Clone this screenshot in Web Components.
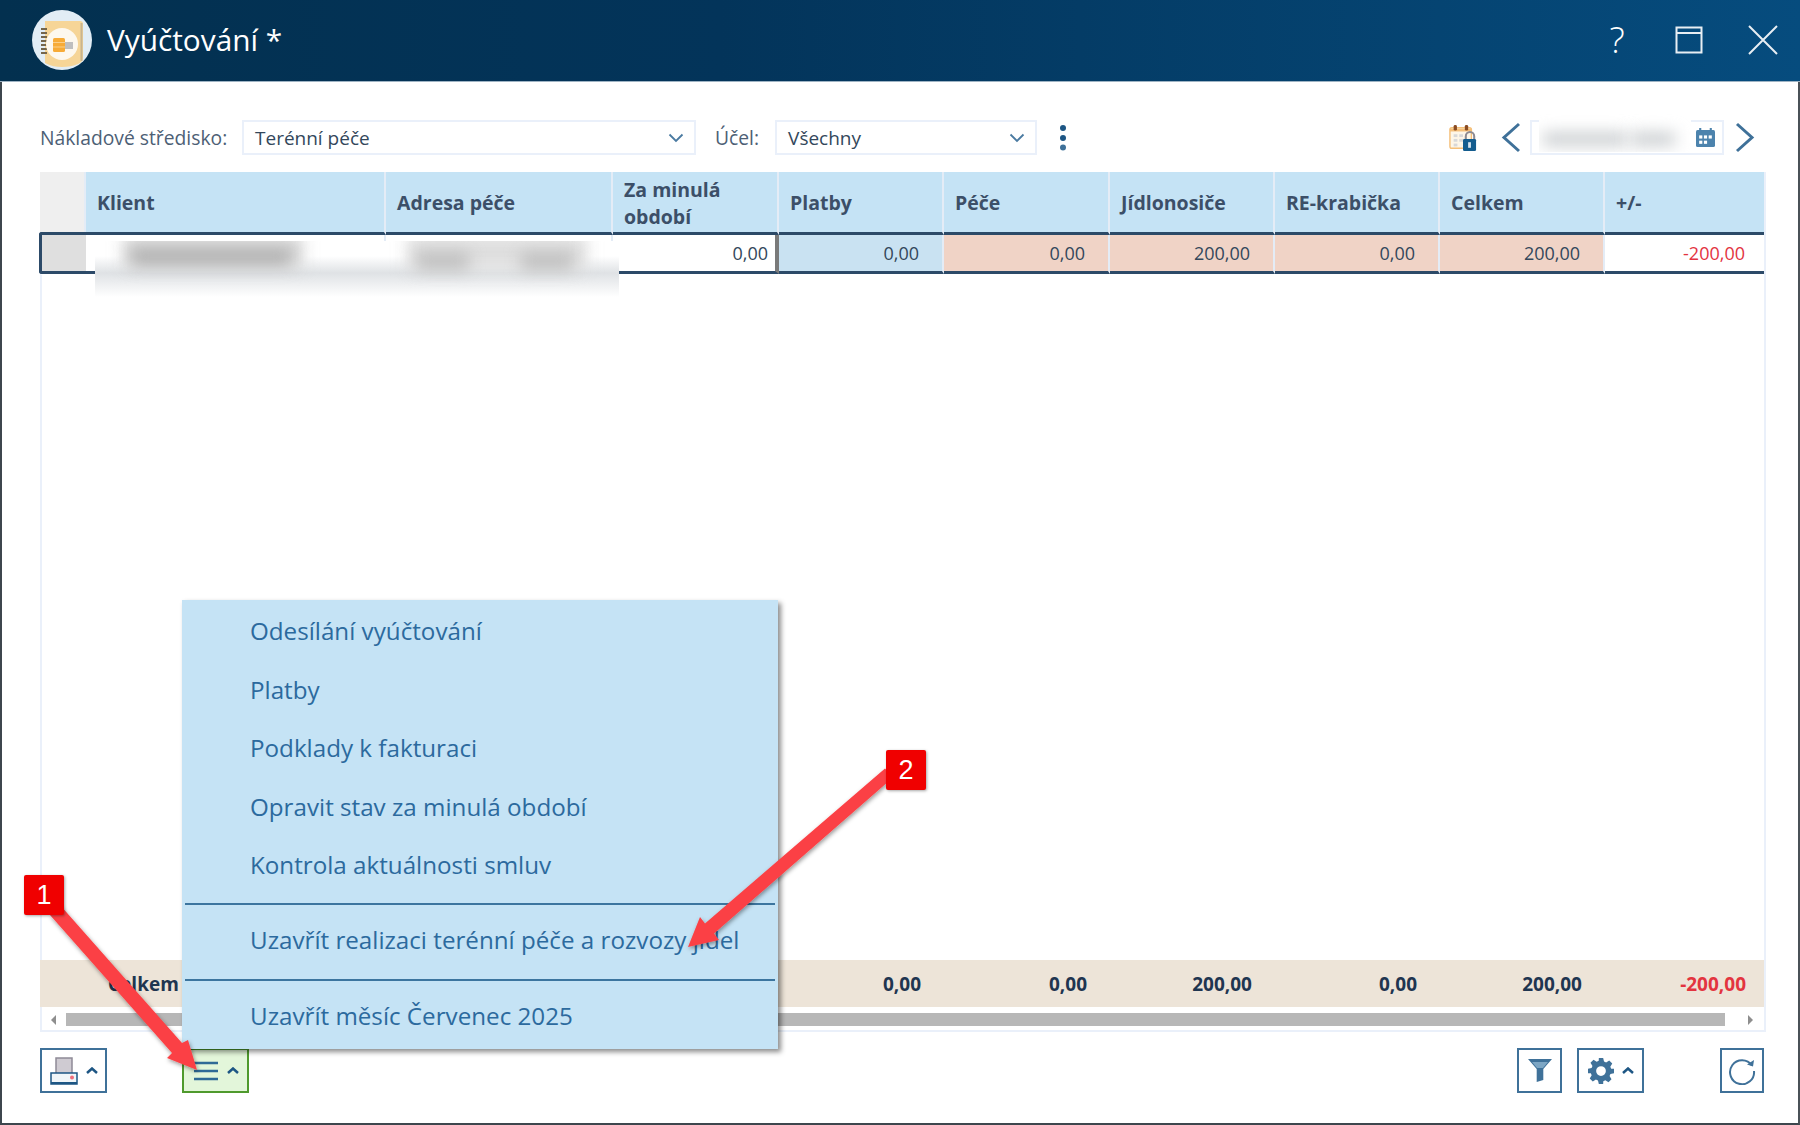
<!DOCTYPE html>
<html lang="cs">
<head>
<meta charset="utf-8">
<title>Vyúčtování</title>
<style>
html, body { margin: 0; padding: 0; background: #fff; }
body { width: 1800px; height: 1125px; overflow: hidden; font-family: "Open Sans", "Noto Sans", sans-serif; }
</style>
</head>
<body>
<app-window>
  <title-bar slot="title" caption="Vyúčtování *"></title-bar>
  <filter-bar slot="filters"></filter-bar>
  <bill-grid slot="grid"></bill-grid>
  <bottom-bar slot="actions"></bottom-bar>
  <action-menu slot="overlay"></action-menu>
  <call-outs slot="overlay"></call-outs>
</app-window>

<script>
class AppWindow extends HTMLElement {
    constructor() {
        super();
        this.attachShadow({mode: 'open'});
        this.shadowRoot.innerHTML = `
      <style>
    :host {
        display: flex;
        flex-direction: column;
        position: relative;
        width: 1800px;
        height: 1125px;
        box-sizing: border-box;
        border-left: 2px solid #3d464d;
        border-right: 2px solid #4a5157;
        border-bottom: 2px solid #3d464d;
        background: #fff;
    }
    .content {
        flex: 1;
        display: flex;
        flex-direction: column;
        min-height: 0;
        padding: 38px 32px 30px 38px;
    }
      </style>
      <slot name="title"></slot>
      <div class="content">
        <slot name="filters"></slot>
        <slot name="grid"></slot>
        <slot name="actions"></slot>
      </div>
      <slot name="overlay"></slot>
  `;
    }
}

class TitleBar extends HTMLElement {
    constructor() {
        super();
        this.attachShadow({mode: 'open'});
        this.shadowRoot.innerHTML = `
      <style>
    :host {
        display: flex;
        align-items: center;
        flex: none;
        height: 82px;
        margin-left: -2px;
        margin-right: -2px;
        padding: 0 0 2px 32px;
        box-sizing: border-box;
        background: linear-gradient(90deg, #03304f 0%, #03345a 40%, #064c7e 100%);
        border-bottom: 1px solid #9fb4c4;
        color: #fff;
    }
    .logo { width: 60px; height: 60px; flex: none; }
    h1 {
        margin: 0 0 0 15px;
        font: 400 29.8px "Open Sans", sans-serif;
        flex: 1;
    }
    .help {
        font: 300 36px "Open Sans", sans-serif;
        width: 40px;
        text-align: center;
        margin-right: 38px;
    }
    svg.btn { flex: none; }
      </style>
      <svg class="logo" viewBox="0 0 60 60">
        <circle cx="30" cy="30" r="30" fill="#e2edf5"/>
        <path d="M13 11h35a3 3 0 0 1 3 3v33c0 3-1 5-5 7-4 2-10 3-16 3-6 0-11-1-17-4z" fill="#f6d597"/>
        <path d="M49.500 13v38" stroke="#c9b48f" stroke-width="2"/>
        <g fill="#75664b"><rect x="9" y="18" width="6" height="2"/><rect x="9" y="22" width="6" height="2"/><rect x="9" y="26" width="6" height="2"/><rect x="9" y="30" width="6" height="2"/><rect x="9" y="34" width="6" height="2"/><rect x="9" y="38" width="6" height="2"/><rect x="9" y="42" width="6" height="2"/></g>
        <circle cx="30" cy="34" r="16" fill="#fdf8ee"/>
        <rect x="21" y="28" width="12" height="14" rx="1.500" fill="#f7ab37"/>
        <path d="M21 32.500h12M21 37h12" stroke="#fbd08a" stroke-width="1"/>
        <rect x="33" y="32" width="8" height="7" fill="#bfbfbf"/>
      </svg>
      <h1>${this.getAttribute('caption')}</h1>
      <span class="help">?</span>
      <svg class="btn" width="28" height="28" viewBox="0 0 28 28" style="margin-right:45px" fill="none" stroke="#e8eef3">
        <rect x="1.500" y="1.500" width="25" height="25" stroke-width="2"/>
        <path d="M1.500 7h25" stroke-width="2"/>
      </svg>
      <svg class="btn" width="30" height="30" viewBox="0 0 30 30" style="margin-right:22px" fill="none" stroke="#e8eef3" stroke-width="2">
        <path d="M1 1l28 28M29 1L1 29"/>
      </svg>
  `;
    }
}

class ComboBox extends HTMLElement {
    constructor() {
        super();
        this.attachShadow({mode: 'open'});
        this.shadowRoot.innerHTML = `
      <style>
    :host {
        display: flex;
        align-items: center;
        justify-content: space-between;
        box-sizing: border-box;
        height: 35px;
        padding: 0 10px 0 11px;
        border: 2px solid #eaf0fa;
        background: #fff;
        font: 19px "Open Sans", sans-serif;
        color: #33475b;
    }
    svg { display: block; }
      </style>
      <slot></slot>
      <svg width="16" height="10" viewBox="0 0 16 10" fill="none" stroke="#4a7aa1" stroke-width="1.800"><path d="M1.500 1.500L8 8l6.500-6.500"/></svg>
  `;
    }
}

class FilterBar extends HTMLElement {
    constructor() {
        super();
        this.attachShadow({mode: 'open'});
        this.shadowRoot.innerHTML = `
      <style>
    :host {
        display: flex;
        align-items: center;
        flex: none;
        height: 35px;
        margin: 0 2px 17px 0;
        font: 19.300px "Open Sans", sans-serif;
        color: #4d6075;
    }
    .lbl { white-space: nowrap; flex: none; }
    .cost-lbl { width: 202px; }
    combo-box.cost { width: 454px; flex: none; }
    combo-box.goal { width: 262px; flex: none; margin-left: 16px; }
    .goal-lbl { margin-left: 19px; }
    .dots { margin-left: 22px; }
    .spacer { flex: 1; }
    .date {
        position: relative;
        box-sizing: border-box;
        width: 194px;
        height: 35px;
        margin: 0 11px 0 9px;
        border: 2px solid #eaf0fa;
    }
    .date svg { position: absolute; right: 7px; top: 6px; }
    .veil {
        position: absolute;
        left: 7px;
        top: -8px;
        width: 152px;
        height: 38px;
        overflow: hidden;
        background: #fff;
    }
    .veil i {
        position: absolute;
        top: 19px;
        height: 12px;
        background: #c3c7ca;
        filter: blur(8px);
    }
    svg { display: block; flex: none; }
      </style>
      <span class="lbl cost-lbl">Nákladové středisko:</span>
      <combo-box class="cost">Terénní péče</combo-box>
      <span class="lbl goal-lbl">Účel:</span>
      <combo-box class="goal">Všechny</combo-box>
      <svg class="dots" width="8" height="28" viewBox="0 0 8 28" fill="#3f7199">
        <circle cx="4" cy="4" r="3" fill="#1d5684"/><circle cx="4" cy="14" r="3" fill="#1d5684"/><circle cx="4" cy="23.500" r="3"/>
      </svg>
      <div class="spacer"></div>
      <svg width="28" height="28" viewBox="0 0 30 30">
        <rect x="1" y="4" width="23" height="22" rx="2" fill="#fdf6e8" stroke="#f5bf78" stroke-width="1.500"/>
        <path d="M1 5h23v3H1z" fill="#f5bf78"/>
        <rect x="5" y="1" width="3.500" height="6" rx="1.500" fill="#8a4b22"/>
        <rect x="17" y="1" width="3.500" height="6" rx="1.500" fill="#8a4b22"/>
        <g fill="#d8d8d8"><rect x="5" y="11" width="4" height="3"/><rect x="11" y="11" width="4" height="3"/><rect x="5" y="16" width="4" height="3"/><rect x="11" y="16" width="4" height="3"/><rect x="5" y="21" width="4" height="3"/></g>
        <path d="M18 17v-4a4.500 4.500 0 0 1 9 0v4" fill="none" stroke="#8d8a92" stroke-width="2.200"/>
        <rect x="15" y="16" width="14" height="13" rx="1.500" fill="#135c8e"/>
        <rect x="20.500" y="19.500" width="3" height="6" fill="#d5e3ee"/>
      </svg>
      <svg style="margin-left:24px" width="20" height="31" viewBox="0 0 20 31" fill="none" stroke="#3f7199" stroke-width="3"><path d="M18 2L3 15.500 18 29"/></svg>
      <div class="date">
        <div class="veil"><i style="left:4px;width:84px"></i><i style="left:92px;width:44px"></i></div>
        <svg width="19" height="19" viewBox="0 0 18 18">
          <rect x="0" y="2" width="18" height="16" rx="1.500" fill="#4c83ad"/>
          <rect x="3" y="0" width="2" height="4" fill="#4c83ad"/><rect x="13" y="0" width="2" height="4" fill="#4c83ad"/>
          <g fill="#fff"><rect x="3" y="7" width="3" height="3"/><rect x="7.500" y="7" width="3" height="3"/><rect x="12" y="7" width="3" height="3"/><rect x="3" y="12" width="3" height="3"/><rect x="7.500" y="12" width="3" height="3"/></g>
        </svg>
      </div>
      <svg style="margin-right:9px" width="20" height="31" viewBox="0 0 20 31" fill="none" stroke="#3f7199" stroke-width="3"><path d="M2 2l15 13.500L2 29"/></svg>
  `;
    }
}

class BillGrid extends HTMLElement {
    constructor() {
        super();
        this.attachShadow({mode: 'open'});
        const heads = ['Klient', 'Adresa péče', 'Za minulá<br>období', 'Platby', 'Péče', 'Jídlonosiče', 'RE-krabička', 'Celkem', '+/-'];
        const row = ['0,00', '0,00', '0,00', '200,00', '0,00', '200,00', '-200,00'];
        const total = ['', '0,00', '0,00', '200,00', '0,00', '200,00', '-200,00'];
        this.shadowRoot.innerHTML = `
      <style>
    :host {
        display: flex;
        flex-direction: column;
        flex: 1;
        min-height: 0;
        box-sizing: border-box;
        border-right: 2px solid #eaf0fa;
        border-bottom: 2px solid #eaf0fa;
        font: 18px "Open Sans", sans-serif;
        color: #33475b;
        --cols: 46px 300px 227px 166px 165px 166px 165px 165px 165px 1fr;
    }
    .r { display: grid; grid-template-columns: var(--cols); flex: none; }
    .head { height: 63px; }
    .head > div {
        display: flex;
        align-items: center;
        box-sizing: border-box;
        padding: 1px 0 0 11px;
        background: #c5e3f5;
        border-right: 2px solid #e4ecf6;
        border-bottom: 3px solid #2c4a68;
        font-weight: 700;
        font-size: 19.500px;
        line-height: 27px;
        color: #3c4f68;
    }
    .head > div:first-child { background: #efefef; border-bottom-color: transparent; }
    .head > div:last-child { border-right: 0; }
    .row { height: 39px; }
    .row > div {
        box-sizing: border-box;
        padding-right: 23px;
        line-height: 37px;
        text-align: right;
        border-right: 2px solid #e4ecf6;
        border-bottom: 3px solid #2c4a68;
        height: 39px;
    }
    .row > .handle {
        background: #dfdfdf;
        border: 3px solid #2c4a68;
        border-right-width: 0;
        border-radius: 3px 0 0 3px;
        margin: -3px 0 0 -1px;
        height: 42px;
    }
    .row > .edit { border-right: 4px solid #7a7a7a; padding-right: 7px; }
    .row > .blue { background: #c9e2f2; }
    .row > .peach { background: #f0d3c6; }
    .row > div:last-child { border-right: 0; color: #e3343f; padding-right: 19px; }
    .body { flex: 1; min-height: 0; border-top: 1px solid transparent; border-left: 2px solid #eaf0fa; }
    .foot { height: 47px; background: #ede4d8; font-weight: 700; font-size: 19px; color: #1f3550; }
    .foot > div { line-height: 48px; text-align: right; padding-right: 23px; }
    .foot > .cap { text-align: left; padding: 0 0 0 22px; }
    .foot > div:last-child { color: #e3343f; padding-right: 18px; }
    .scroll {
        display: flex;
        align-items: center;
        flex: none;
        height: 23px;
        box-sizing: border-box;
        padding-top: 2px;
        border-left: 2px solid #eaf0fa;
    }
    .scroll .thumb { flex: 1; height: 13px; background: #b7b7b7; margin: 0 23px 0 10px; }
    .arrow-l { width: 0; height: 0; margin-left: 9px; border: 5px solid transparent; border-left: 0; border-right: 5px solid #8e8e8e; }
    .arrow-r { width: 0; height: 0; margin-right: 11px; border: 5px solid transparent; border-right: 0; border-left: 5px solid #8e8e8e; }
    .veil {
        position: absolute;
        left: 93px;
        top: 241px;
        width: 524px;
        height: 56px;
        overflow: hidden;
        background: linear-gradient(#fff 0, #fff 15px, #dfe2e5 32px, #fff 56px);
    }
    .veil i { position: absolute; filter: blur(8px); }
      </style>
      <div class="r head"><div></div>${heads.map(h => `<div>${h}</div>`).join('')}</div>
      <div class="r row">
        <div class="handle"></div><div></div><div></div>
        <div class="edit">${row[0]}</div>
        <div class="blue">${row[1]}</div>
        <div class="peach">${row[2]}</div>
        <div class="peach">${row[3]}</div>
        <div class="peach">${row[4]}</div>
        <div class="peach">${row[5]}</div>
        <div>${row[6]}</div>
      </div>
      <div class="body"></div>
      <div class="r foot">
        <div></div><div class="cap">Celkem</div>
        <div></div>${total.map(v => `<div>${v}</div>`).join('')}
      </div>
      <div class="scroll"><span class="arrow-l"></span><span class="thumb"></span><span class="arrow-r"></span></div>
      <div class="veil">
        <i style="left:28px;width:180px;top:-6px;height:32px;background:#d6d6d6"></i>
        <i style="left:36px;width:160px;top:9px;height:14px;background:#aaa"></i>
        <i style="left:312px;width:180px;top:-6px;height:34px;background:#dedede"></i>
        <i style="left:322px;width:52px;top:12px;height:16px;background:#bcbcbc"></i>
        <i style="left:426px;width:52px;top:12px;height:16px;background:#bcbcbc"></i>
      </div>
  `;
    }
}

class ToolButton extends HTMLElement {
    constructor() {
        super();
        this.attachShadow({mode: 'open'});
        this.shadowRoot.innerHTML = `
      <style>
    :host {
        display: flex;
        align-items: center;
        justify-content: center;
        gap: 8px;
        box-sizing: border-box;
        height: 45px;
        width: 45px;
        border: 2px solid #3f7199;
        background: #fff;
    }
    :host([wide]) { width: 67px; }
    :host([active]) { border-color: #4f9a2d; background: #e3f6da; }
    svg { display: block; }
    .caret { display: none; }
    :host([wide]) .caret { display: block; }
      </style>
      <slot></slot>
      <svg class="caret" width="12" height="7" viewBox="0 0 12 7" fill="none" stroke="#1d5684" stroke-width="2.500"><path d="M1 6l5-4.500L11 6"/></svg>
  `;
    }
}

class BottomBar extends HTMLElement {
    constructor() {
        super();
        this.attachShadow({mode: 'open'});
        this.shadowRoot.innerHTML = `
      <style>
    :host {
        display: flex;
        align-items: center;
        flex: none;
        height: 45px;
        margin: 16px 2px 0 0;
    }
    .spacer { flex: 1; }
    svg { display: block; }
      </style>
      <tool-button wide>
        <svg width="28" height="28" viewBox="0 0 28 28">
          <rect x="6" y="1" width="16" height="17" fill="#cfcbd2" stroke="#8f8a97" stroke-width="1.500"/>
          <rect x="1" y="16" width="26" height="11" fill="#f0f5f8" stroke="#1d5684" stroke-width="1.500"/>
          <path d="M1 26h26" stroke="#1d5684" stroke-width="2"/>
          <circle cx="22" cy="20.500" r="2" fill="#ef6f7c"/>
        </svg>
      </tool-button>
      <tool-button wide active style="margin-left:75px">
        <svg width="26" height="20" viewBox="0 0 26 20" fill="none" stroke="#2f6a96" stroke-width="2.600"><path d="M1 2h24M1 10h24M1 18h24"/></svg>
      </tool-button>
      <div class="spacer"></div>
      <tool-button>
        <svg width="24" height="24" viewBox="0 0 24 24"><path d="M0 0h24L15.300 10v11L8.700 23V10z" fill="#3f7199"/><path d="M4 3h16l-5 6H9z" fill="#7da6c4"/></svg>
      </tool-button>
      <tool-button wide style="margin-left:15px">
        <svg width="26" height="26" viewBox="0 0 24 24"><path fill="#3f7199" fill-rule="evenodd" d="M10 0h4l.8 3.300 1.900.8 2.900-1.800 2.800 2.800-1.800 2.900.8 1.900L24 10v4l-3.300.8-.8 1.900 1.800 2.900-2.800 2.800-2.900-1.800-1.900.8L14 24h-4l-.8-3.300-1.900-.8-2.900 1.800-2.800-2.800 1.800-2.900-.8-1.900L0 14v-4l3.300-.8.8-1.900-1.800-2.900 2.800-2.800 2.900 1.800 1.900-.8zM12 7.500a4.500 4.500 0 1 0 0 9 4.500 4.500 0 0 0 0-9z"/></svg>
      </tool-button>
      <tool-button style="margin-left:76px;width:44px">
        <svg width="28" height="28" viewBox="0 0 28 28" fill="none" stroke="#3f7199" stroke-width="2"><path d="M24 8.500A12 12 0 1 0 26 14"/><path d="M19 7.500l6 2 1-6.500z" fill="#3f7199" stroke="none"/></svg>
      </tool-button>
  `;
    }
}

class ActionMenu extends HTMLElement {
    constructor() {
        super();
        this.attachShadow({mode: 'open'});
        const item = (t, cls = '') => `<div class="item ${cls}">${t}</div>`;
        this.shadowRoot.innerHTML = `
      <style>
    :host {
        position: absolute;
        left: 180px;
        top: 600px;
        width: 596px;
        height: 449px;
        box-sizing: border-box;
        padding: 2px 3px 0;
        background: #c5e3f5;
        box-shadow: 3px 3px 5px rgba(0,0,0,.45);
        font: 24.200px "Open Sans", sans-serif;
        color: #2c6a9e;
    }
    .item { height: 58.600px; line-height: 58px; padding-left: 65px; white-space: nowrap; }
    .item.low { line-height: 56px; }
    hr { border: 0; height: 2px; background: #3c759f; margin: 8px 0 7px; }
      </style>
      ${item('Odesílání vyúčtování')}
      ${item('Platby')}
      ${item('Podklady k fakturaci')}
      ${item('Opravit stav za minulá období')}
      ${item('Kontrola aktuálnosti smluv')}
      <hr>
      ${item('Uzavřít realizaci terénní péče a rozvozy jídel', 'low')}
      <hr>
      ${item('Uzavřít měsíc Červenec 2025', 'low')}
  `;
    }
}

// annotation layer lies over everything, positions are the content here
class CallOuts extends HTMLElement {
    constructor() {
        super();
        this.attachShadow({mode: 'open'});
        this.shadowRoot.innerHTML = `
      <style>
    :host {
        position: absolute;
        left: -2px;
        top: 0;
        width: 1800px;
        height: 1125px;
        pointer-events: none;
    }
    svg { position: absolute; left: 0; top: 0; }
    .badge {
        position: absolute;
        width: 40px;
        height: 40px;
        border-radius: 2px;
        background: #f00000;
        box-shadow: 1px 1px 3px rgba(0,0,0,.35);
        color: #fff;
        font: 27px/40px "Liberation Sans", Arial, sans-serif;
        text-align: center;
    }
      </style>
      <svg width="1800" height="1125" viewBox="0 0 1800 1125">
        <defs><filter id="s" x="-10%" y="-10%" width="120%" height="120%"><feDropShadow dx="1" dy="2" stdDeviation="2" flood-color="#000" flood-opacity=".4"/></filter></defs>
        <g fill="#fb4145" filter="url(#s)">
          <path d="M50 915L60 905 182 1043 188 1040 197 1070 167 1058 172 1053z"/>
          <path d="M885 768.500L705 923.500 700 917 688 947 719 940 714 933.500 893 777.500z"/>
        </g>
      </svg>
      <div class="badge" style="left:24px;top:875px">1</div>
      <div class="badge" style="left:886px;top:750px">2</div>
  `;
    }
}

customElements.define('app-window', AppWindow);
customElements.define('title-bar', TitleBar);
customElements.define('combo-box', ComboBox);
customElements.define('filter-bar', FilterBar);
customElements.define('bill-grid', BillGrid);
customElements.define('tool-button', ToolButton);
customElements.define('bottom-bar', BottomBar);
customElements.define('action-menu', ActionMenu);
customElements.define('call-outs', CallOuts);
</script>
</body>
</html>
